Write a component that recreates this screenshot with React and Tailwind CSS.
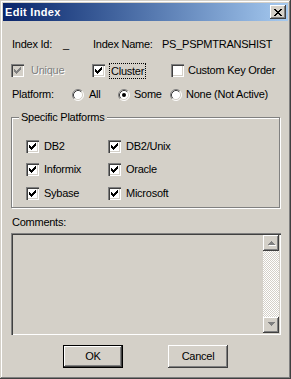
import React from 'react';

const sunken = 'shadow-[inset_1px_1px_#808080,inset_2px_2px_#404040,inset_-1px_-1px_#fff,inset_-2px_-2px_#d4d0c8]';
const raised = 'shadow-[inset_-1px_-1px_#404040,inset_1px_1px_#fff,inset_-2px_-2px_#808080,inset_2px_2px_#d4d0c8]';

const CheckBox = ({ checked, disabled }) => (
  <span className={`w-[13px] h-[13px] shrink-0 flex items-center justify-center ${disabled ? 'bg-[#d4d0c8]' : 'bg-white'} ${sunken}`}>
    {checked && (
      <svg width="7" height="7" viewBox="0 0 7 7" shapeRendering="crispEdges">
        <path
          d="M0 2h1v3H0zM1 3h1v3H1zM2 4h1v3H2zM3 3h1v3H3zM4 2h1v3H4zM5 1h1v3H5zM6 0h1v3H6z"
          fill={disabled ? '#808080' : '#000'}
        />
      </svg>
    )}
  </span>
);

const Radio = ({ checked }) => (
  <svg width="12" height="12" viewBox="0 0 12 12" className="shrink-0">
    <circle cx="6" cy="6" r="5" fill="#fff" />
    <path d="M2.11 9.89 A5.5 5.5 0 0 1 9.89 2.11" fill="none" stroke="#808080" />
    <path d="M9.89 2.11 A5.5 5.5 0 0 1 2.11 9.89" fill="none" stroke="#fff" />
    <path d="M2.82 9.18 A4.5 4.5 0 0 1 9.18 2.82" fill="none" stroke="#404040" />
    <path d="M9.18 2.82 A4.5 4.5 0 0 1 2.82 9.18" fill="none" stroke="#d4d0c8" />
    {checked && <circle cx="6" cy="6" r="2" fill="#000" />}
  </svg>
);

const Arrow = ({ down }) => (
  <svg width="9" height="6" viewBox="0 0 9 6" shapeRendering="crispEdges">
    <g transform={down ? 'matrix(1 0 0 -1 0 5)' : undefined}>
      <path d="M1 4h7v1H1zM2 3h5v1H2zM3 2h3v1H3zM4 1h1v1H4z" fill="#fff" transform="translate(1 1)" />
      <path d="M1 4h7v1H1zM2 3h5v1H2zM3 2h3v1H3zM4 1h1v1H4z" fill="#808080" />
    </g>
  </svg>
);

const Button = ({ label, primary }) => (
  <button
    className={`w-[60px] h-[23px] bg-[#d4d0c8] flex items-center justify-center ${
      primary
        ? 'shadow-[inset_-1px_-1px_#000,inset_1px_1px_#000,inset_-2px_-2px_#404040,inset_2px_2px_#fff,inset_-3px_-3px_#808080]'
        : raised
    }`}
  >
    {label}
  </button>
);

export default function App() {
  return (
    <div className="w-[291px] h-[379px] bg-[#d4d0c8] p-[3px] text-black text-[11px] leading-[13px] tracking-[-0.25px] font-['Liberation_Sans',Arial,sans-serif] shadow-[inset_-1px_-1px_#404040,inset_1px_1px_#d4d0c8,inset_-2px_-2px_#808080,inset_2px_2px_#fff]">
      {/* Title bar */}
      <div className="h-[18px] flex items-center justify-between bg-linear-to-r from-[#0a246a] to-[#a6caf0] pl-[2px] pr-[2px]">
        <span className="text-white font-bold tracking-[0.3px]">Edit Index</span>
        <button className={`w-[16px] h-[14px] bg-[#d4d0c8] flex items-center justify-center ${raised}`}>
          <svg width="8" height="7" viewBox="0 0 8 7" shapeRendering="crispEdges">
            <path
              d="M0 0h2v1H0zM6 0h2v1H6zM1 1h2v1H1zM5 1h2v1H5zM2 2h4v1H2zM3 3h2v1H3zM2 4h4v1H2zM1 5h2v1H1zM5 5h2v1H5zM0 6h2v1H0zM6 6h2v1H6z"
              fill="#000"
            />
          </svg>
        </button>
      </div>

      <div className="px-[8px]">
        {/* Index id / name */}
        <div className="mt-[17px] h-[13px] flex items-center">
          <span className="w-[52px] pl-[1px]">Index Id:</span>
          <span className="w-[30px]">_</span>
          <span className="w-[69px]">Index Name:</span>
          <span>PS_PSPMTRANSHIST</span>
        </div>

        {/* Flags */}
        <div className="mt-[13px] h-[13px] flex items-center">
          <div className="w-[81px] flex items-center">
            <CheckBox checked disabled />
            <span className="ml-[7px] text-[#808080] [text-shadow:1px_1px_0_#fff]">Unique</span>
          </div>
          <div className="w-[79px] flex items-center">
            <CheckBox checked />
            <span className="ml-[4px] border border-dotted border-black px-[1px] leading-[14px]">Cluster</span>
          </div>
          <div className="flex items-center">
            <CheckBox />
            <span className="ml-[4px]">Custom Key Order</span>
          </div>
        </div>

        {/* Platform */}
        <div className="mt-[11px] h-[13px] flex items-center">
          <span className="w-[61px] pl-[1px]">Platform:</span>
          <div className="w-[46px] flex items-center">
            <Radio />
            <span className="ml-[5px]">All</span>
          </div>
          <div className="w-[52px] flex items-center">
            <Radio checked />
            <span className="ml-[4px]">Some</span>
          </div>
          <div className="flex items-center">
            <Radio />
            <span className="ml-[4px]">None (Not Active)</span>
          </div>
        </div>

        {/* Specific platforms group */}
        <div className="relative mt-[16px] w-[269px] h-[91px] border border-[#808080] shadow-[inset_1px_1px_#fff,1px_1px_#fff]">
          <span className="absolute left-[7px] top-[-7px] px-[2px] bg-[#d4d0c8]">Specific Platforms</span>
          <div className="pt-[22px] pl-[14px] grid grid-cols-[82px_auto] gap-y-[10px]">
            {[
              ['DB2', 'DB2/Unix'],
              ['Informix', 'Oracle'],
              ['Sybase', 'Microsoft'],
            ].map(([a, b], i) => (
              <React.Fragment key={a}>
                <div className={`h-[13px] flex items-center ${i === 2 ? 'mt-[1px]' : ''}`}>
                  <CheckBox checked />
                  <span className="ml-[5px]">{a}</span>
                </div>
                <div className={`h-[13px] flex items-center ${i === 2 ? 'mt-[1px]' : ''}`}>
                  <CheckBox checked />
                  <span className="ml-[5px]">{b}</span>
                </div>
              </React.Fragment>
            ))}
          </div>
        </div>

        {/* Comments */}
        <div className="mt-[8px] h-[13px] pl-[1px]">Comments:</div>
        <div className={`mt-[4px] w-[270px] h-[102px] bg-[#d4d0c8] p-[2px] flex justify-end ${sunken}`}>
          <div className="w-[16px] h-full flex flex-col">
            <div className={`h-[16px] bg-[#d4d0c8] flex items-center justify-center ${raised}`}>
              <Arrow />
            </div>
            <div className="flex-1 bg-[repeating-conic-gradient(#fff_0_25%,#d4d0c8_0_50%)] bg-[length:2px_2px]" />
            <div className={`h-[16px] bg-[#d4d0c8] flex items-center justify-center ${raised}`}>
              <Arrow down />
            </div>
          </div>
        </div>

        {/* Buttons */}
        <div className="mt-[10px] flex pl-[52px] gap-[45px]">
          <Button label="OK" primary />
          <Button label="Cancel" />
        </div>
      </div>
    </div>
  );
}
